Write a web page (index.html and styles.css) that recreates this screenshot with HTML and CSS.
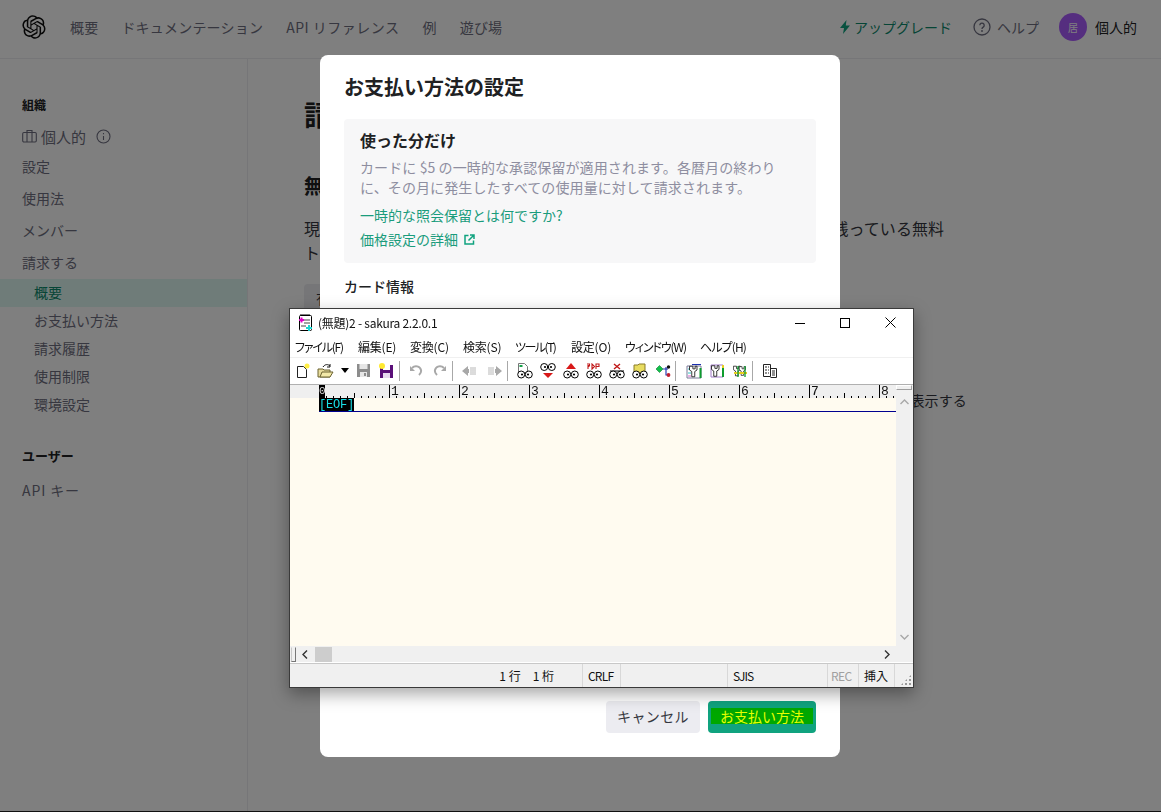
FILE: index.html
```html
<!DOCTYPE html>
<html lang="ja">
<head>
  <meta charset="UTF-8" />
  <meta name="viewport" content="width=device-width, initial-scale=1.0"/>
  <title>お支払い方法の設定</title>
  <link rel="stylesheet" href="styles.css">
</head>
<body>

  <svg class="defs" width="0" height="0">
    <symbol id="eyes" viewBox="0 0 16 16">
      <circle cx="4.2" cy="11.5" r="3.5" fill="#fff" stroke="#000"/>
      <circle cx="11.8" cy="11.5" r="3.5" fill="#fff" stroke="#000"/>
      <circle cx="5" cy="11.5" r="1.1" fill="#000"/>
      <circle cx="11" cy="11.5" r="1.1" fill="#000"/>
    </symbol>
    <symbol id="wrench" viewBox="0 0 16 16">
      <path d="M2 1v5l3 2v7h4V8l3-2V1H9.500v3.500h-3V1z" fill="#fff" stroke="#111" stroke-width="1.100"/>
    </symbol>
  </svg>

  <header class="topbar">
    <svg class="logo" viewBox="0 0 41 41"><path fill="#0d0d0d" d="M37.5324 16.8707C37.9808 15.5241 38.1363 14.0974 37.9886 12.6859C37.8409 11.2744 37.3934 9.91076 36.676 8.68622C35.6126 6.83404 33.9882 5.3676 32.0373 4.4985C30.0864 3.62941 27.9098 3.40259 25.8215 3.85078C24.8796 2.7893 23.7219 1.94125 22.4257 1.36341C21.1295 0.785575 19.7249 0.491269 18.3058 0.500197C16.1708 0.495044 14.0893 1.16803 12.3614 2.42214C10.6335 3.67624 9.34853 5.44666 8.6917 7.47815C7.30085 7.76286 5.98686 8.3414 4.8377 9.17505C3.68854 10.0087 2.73073 11.0782 2.02839 12.312C0.956464 14.1591 0.498905 16.2988 0.721698 18.4228C0.944492 20.5467 1.83612 22.5449 3.268 24.1293C2.81966 25.4759 2.66413 26.9026 2.81182 28.3141C2.95951 29.7256 3.40701 31.0892 4.12437 32.3138C5.18791 34.1659 6.8123 35.6322 8.76321 36.5013C10.7141 37.3704 12.8907 37.5973 14.9789 37.1492C15.9208 38.2107 17.0786 39.0587 18.3747 39.6366C19.6709 40.2144 21.0755 40.5087 22.4946 40.4998C24.6307 40.5054 26.7133 39.8321 28.4418 38.5772C30.1704 37.3223 31.4556 35.5506 32.1119 33.5179C33.5027 33.2332 34.8167 32.6547 35.9659 31.821C37.115 30.9874 38.0728 29.9178 38.7752 28.684C39.8458 26.8371 40.3023 24.6979 40.0789 22.5748C39.8556 20.4517 38.9639 18.4544 37.5324 16.8707ZM22.4978 37.8849C20.7443 37.8874 19.0459 37.2733 17.6994 36.1501C17.7601 36.117 17.8666 36.0586 17.936 36.0161L25.9004 31.4156C26.1003 31.3019 26.2663 31.137 26.3813 30.9378C26.4964 30.7386 26.5563 30.5124 26.5549 30.2825V19.0542L29.9213 20.998C29.9389 21.0068 29.9541 21.0198 29.9656 21.0359C29.977 21.052 29.9842 21.0707 29.9867 21.0902V30.3889C29.9842 32.375 29.1946 34.2791 27.7909 35.6841C26.3872 37.0892 24.4838 37.8806 22.4978 37.8849ZM6.39227 31.0064C5.51397 29.4888 5.19742 27.7107 5.49804 25.9832C5.55718 26.0187 5.66048 26.0818 5.73461 26.1244L13.699 30.7248C13.8975 30.8408 14.1233 30.902 14.3532 30.902C14.583 30.902 14.8088 30.8408 15.0073 30.7248L24.731 25.1103V28.9979C24.7321 29.0177 24.7283 29.0376 24.7199 29.0556C24.7115 29.0736 24.6988 29.0893 24.6829 29.1012L16.6317 33.7497C14.9096 34.7416 12.8643 35.0097 10.9447 34.4954C9.02506 33.9811 7.38785 32.7263 6.39227 31.0064ZM4.29707 13.6194C5.17156 12.0998 6.55279 10.9364 8.19885 10.3327C8.19885 10.4013 8.19491 10.5228 8.19491 10.6071V19.808C8.19351 20.0378 8.25334 20.2638 8.36823 20.4629C8.48312 20.6619 8.64893 20.8267 8.84863 20.9404L18.5723 26.5542L15.206 28.4979C15.1894 28.5089 15.1703 28.5155 15.1505 28.5173C15.1307 28.5191 15.1107 28.516 15.0924 28.5082L7.04046 23.8557C5.32135 22.8601 4.06716 21.2235 3.55289 19.3046C3.03862 17.3858 3.30624 15.3413 4.29707 13.6194ZM31.955 20.0556L22.2312 14.4411L25.5976 12.4981C25.6142 12.4872 25.6333 12.4805 25.6531 12.4787C25.6729 12.4769 25.6928 12.4801 25.7111 12.4879L33.7631 17.1364C34.9967 17.849 36.0017 18.8982 36.6606 20.1613C37.3194 21.4244 37.6047 22.849 37.4832 24.2684C37.3617 25.6878 36.8382 27.0432 35.9743 28.1759C35.1103 29.3086 33.9415 30.1717 32.6047 30.6641C32.6047 30.5947 32.6047 30.4733 32.6047 30.3889V21.188C32.6066 20.9586 32.5474 20.7328 32.4332 20.5338C32.319 20.3348 32.154 20.1698 31.955 20.0556ZM35.3055 15.0128C35.2464 14.9765 35.1431 14.9142 35.069 14.8717L27.1045 10.2712C26.906 10.1554 26.6803 10.0943 26.4504 10.0943C26.2206 10.0943 25.9948 10.1554 25.7963 10.2712L16.0726 15.8858V11.9982C16.0715 11.9783 16.0753 11.9585 16.0837 11.9405C16.0921 11.9225 16.1048 11.9068 16.1207 11.8949L24.1719 7.25025C25.4053 6.53903 26.8158 6.19376 28.2383 6.25482C29.6608 6.31589 31.0364 6.78077 32.2044 7.59508C33.3723 8.40939 34.2842 9.53945 34.8334 10.8531C35.3826 12.1667 35.5464 13.6095 35.3055 15.0128ZM14.2424 21.9419L10.8752 19.9981C10.8576 19.9893 10.8423 19.9763 10.8309 19.9602C10.8195 19.9441 10.8122 19.9254 10.8098 19.9058V10.6071C10.8107 9.18295 11.2173 7.78848 11.9819 6.58696C12.7466 5.38544 13.8377 4.42659 15.1275 3.82264C16.4173 3.21869 17.8524 2.99464 19.2649 3.1767C20.6775 3.35876 22.0089 3.93941 23.1034 4.85067C23.0427 4.88379 22.937 4.94215 22.8668 4.98473L14.9024 9.58517C14.7025 9.69878 14.5366 9.86356 14.4215 10.0626C14.3065 10.2616 14.2466 10.4877 14.2479 10.7175L14.2424 21.9419ZM16.071 17.9991L20.4018 15.4978L24.7325 17.9975V22.9985L20.4018 25.4983L16.071 22.9985V17.9991Z"/></svg>
    <nav class="topnav">
      <a>概要</a>
      <a>ドキュメンテーション</a>
      <a class="api">API リファレンス</a>
      <a>例</a>
      <a>遊び場</a>
    </nav>
    <div class="topright">
      <a class="upgrade">
        <svg width="12" height="16" viewBox="0 0 12 16"><path d="M7.5 1 1 9h4l-1 6 7-8.5H6.8z" fill="#10a37f"/></svg>
        アップグレード
      </a>
      <a class="help">
        <svg width="18" height="18" viewBox="0 0 18 18"><circle cx="9" cy="9" r="8" fill="none" stroke="#6e6e80" stroke-width="1.3"/><path d="M6.8 7.2a2.2 2.2 0 1 1 3.4 1.9c-.8.5-1.2 1-1.2 1.8" fill="none" stroke="#6e6e80" stroke-width="1.3"/><circle cx="9" cy="13" r=".9" fill="#6e6e80"/></svg>
        ヘルプ
      </a>
      <div class="account">
        <span class="avatar">居</span>
        <span>個人的</span>
      </div>
    </div>
  </header>

  <div class="layout">
    <aside class="sidebar">
      <div class="side-head">組織</div>
      <a class="side-link org">
        <svg width="15" height="14" viewBox="0 0 15 14"><rect x=".7" y="3.5" width="13.6" height="9.5" rx="1.2" fill="none" stroke="#6e6e80" stroke-width="1.1"/><path d="M5 13V1.5h5V13" fill="none" stroke="#6e6e80" stroke-width="1.1"/></svg>
        個人的
        <svg class="info" width="15" height="15" viewBox="0 0 15 15"><circle cx="7.5" cy="7.5" r="6.5" fill="none" stroke="#6e6e80" stroke-width="1.1"/><path d="M7.5 7v4M7.5 4v1.3" stroke="#6e6e80" stroke-width="1.1"/></svg>
      </a>
      <a class="side-link">設定</a>
      <a class="side-link">使用法</a>
      <a class="side-link">メンバー</a>
      <a class="side-link">請求する</a>
      <a class="side-sub active">概要</a>
      <a class="side-sub">お支払い方法</a>
      <a class="side-sub">請求履歴</a>
      <a class="side-sub">使用制限</a>
      <a class="side-sub">環境設定</a>
      <div class="side-head user">ユーザー</div>
      <a class="side-link api-key">API キー</a>
    </aside>

    <main class="content">
      <h1>請求する</h1>
      <h2>無料トライアル</h2>
      <p>現在、無料トライアルをご利用いただいています。お客様のアカウントに残っている無料<br>トークンを使い切るまでご利用いただけます。</p>
      <a class="plain-btn">有料アカウントの設定</a>
      <p class="show-more">支払い方法を表示する</p>
    </main>
  </div>

  <div class="overlay">
    <section class="modal">
      <h3>お支払い方法の設定</h3>
      <div class="plan">
        <h4>使った分だけ</h4>
        <p>カードに $5 の一時的な承認保留が適用されます。各暦月の終わりに、その月に発生したすべての使用量に対して請求されます。</p>
        <a class="plan-link first">一時的な照会保留とは何ですか?</a>
        <a class="plan-link">価格設定の詳細
          <svg width="11" height="11" viewBox="0 0 11 11"><path d="M4.500 1.500H1v8.500h8.500V6.500M6 1h4v4M10 1 4.500 6.500" fill="none" stroke="#10a37f" stroke-width="1.500"/></svg>
        </a>
      </div>
      <div class="card-label">カード情報</div>
      <div class="modal-foot">
        <button class="btn-cancel">キャンセル</button>
        <button class="btn-pay"><span class="marked">お支払い方法</span></button>
      </div>
    </section>
  </div>

  <div class="editor">
    <div class="titlebar">
      <svg class="app-icon" width="16" height="17" viewBox="0 0 16 17">
        <rect x="1.500" y="1.500" width="12" height="15" rx="1" fill="#fff" stroke="#000"/>
        <path d="M2.500 1h10" stroke="#000" stroke-dasharray="1 1" stroke-width="2"/>
        <path d="M6 6h6M6 9h6M3 12h5" stroke="#444"/>
        <path d="M1 6h5M3.500 3.500v5" stroke="#e000c8" stroke-width="2"/>
        <path d="M8 14h6M11 11v6" stroke="#18d8d0" stroke-width="2"/>
      </svg>
      <span class="title-text">(無題)2 - sakura 2.2.0.1</span>
      <div class="winctl">
        <svg width="10" height="10" viewBox="0 0 10 10"><path d="M0 5.500h10" stroke="#000"/></svg>
        <svg width="10" height="10" viewBox="0 0 10 10"><rect x=".5" y=".5" width="9" height="9" fill="none" stroke="#000"/></svg>
        <svg width="11" height="11" viewBox="0 0 11 11"><path d="M.5.500l10 10M10.500.500l-10 10" stroke="#000"/></svg>
      </div>
    </div>

    <div class="menubar">
      <span class="m1">ファイル(F)</span>
      <span class="m2">編集(E)</span>
      <span class="m3">変換(C)</span>
      <span class="m4">検索(S)</span>
      <span class="m5">ツール(T)</span>
      <span class="m6">設定(O)</span>
      <span class="m7">ウィンドウ(W)</span>
      <span class="m8">ヘルプ(H)</span>
    </div>

    <div class="toolbar">
      <span class="tool"><svg width="16" height="16" viewBox="0 0 16 16"><path d="M2.500 3.500h6l3 3v8h-9z" fill="#fff" stroke="#222"/><circle cx="12" cy="3" r="2.500" fill="#ffee44"/></svg></span>
      <span class="tool"><svg width="17" height="16" viewBox="0 0 17 16"><path d="M1 6h5l1 1h6v7H1z" fill="#e8dc9c" stroke="#6b6230"/><path d="M3 14l2-5h11l-3 5z" fill="#f3e9a8" stroke="#6b6230"/><path d="M6 4c2-3 5-3 7-1M13 1v3h-3" fill="none" stroke="#111"/></svg></span>
      <span class="tool-arrow"><svg width="8" height="5" viewBox="0 0 8 5"><path d="M0 0h8L4 5z" fill="#000"/></svg></span>
      <span class="tool"><svg width="15" height="15" viewBox="0 0 15 15"><path d="M1 1h13v13H1z" fill="#8c8c8c"/><rect x="3.500" y="1" width="8" height="5" fill="#e6e6e6"/><rect x="4" y="9" width="7" height="5" fill="#e6e6e6"/><rect x="8" y="10" width="2" height="3" fill="#8c8c8c"/></svg></span>
      <span class="tool"><svg width="15" height="16" viewBox="0 0 15 16"><path d="M1 2h13v13H1z" fill="#5a0f78"/><rect x="4" y="2" width="7" height="5" fill="#fff"/><rect x="4" y="10" width="7" height="5" fill="#e8d8f0"/><circle cx="3" cy="3" r="3" fill="#ffe930"/></svg></span>
      <span class="tool-sep"></span>
      <span class="tool"><svg width="13" height="11" viewBox="0 0 13 11"><path d="M2 3c3-3 8-2 9 2 .4 2-.4 3.500-2 5" fill="none" stroke="#a8a8a8" stroke-width="2"/><path d="M0 1v5h5z" fill="#a8a8a8"/></svg></span>
      <span class="tool"><svg width="13" height="11" viewBox="0 0 13 11"><path d="M11 3C8 0 3 1 2 5c-.4 2 .4 3.500 2 5" fill="none" stroke="#a8a8a8" stroke-width="2"/><path d="M13 1v5H8z" fill="#a8a8a8"/></svg></span>
      <span class="tool-sep"></span>
      <span class="tool"><svg width="15" height="12" viewBox="0 0 15 12"><path d="M0 6l6-5v3h1v4H6v3z" fill="#a8a8a8"/><path d="M8 3h6M8 5h6M8 7h6M8 9h6" stroke="#b8b8b8"/></svg></span>
      <span class="tool push"><svg width="15" height="12" viewBox="0 0 15 12"><path d="M15 6L9 1v3H8v4h1v3z" fill="#a8a8a8"/><path d="M1 3h6M1 5h6M1 7h6M1 9h6" stroke="#b8b8b8"/></svg></span>
      <span class="tool-sep"></span>
      <span class="tool"><svg width="16" height="16" viewBox="0 0 16 16"><path d="M1.500.500h6l3 3v6h-9z" fill="#fff" stroke="#777"/><rect x="2.500" y="2" width="3" height="2" fill="#16a34a"/><use href="#eyes" width="16" height="16"/></svg></span>
      <span class="tool"><svg width="16" height="16" viewBox="0 0 16 16"><circle cx="4.200" cy="4" r="3.500" fill="#fff" stroke="#000"/><circle cx="11.800" cy="4" r="3.500" fill="#fff" stroke="#000"/><circle cx="5" cy="4" r="1.100"/><circle cx="11" cy="4" r="1.100"/><path d="M3 10h10l-5 5z" fill="#d81818"/></svg></span>
      <span class="tool"><svg width="16" height="16" viewBox="0 0 16 16"><path d="M8 0l5 6H3z" fill="#d81818"/><use href="#eyes" width="16" height="16"/></svg></span>
      <span class="tool"><svg width="16" height="16" viewBox="0 0 16 16"><path d="M1 1h2.500v1.500H2V6M2 3.500h1.500M6 6l2.500-2.500L6 1zM10 6V1h3v2.500h-3" fill="none" stroke="#c01818" stroke-width="1.100"/><use href="#eyes" width="16" height="16"/></svg></span>
      <span class="tool"><svg width="16" height="16" viewBox="0 0 16 16"><path d="M5 1l6 5M11 1L5 6" stroke="#c01818" stroke-width="1.400"/><path d="M1 8h14" stroke="#000"/><use href="#eyes" width="16" height="16"/></svg></span>
      <span class="tool"><svg width="16" height="16" viewBox="0 0 16 16"><path d="M2 2h4l1-1h6v9H2z" fill="#e8dc60" stroke="#8a7c28"/><use href="#eyes" width="16" height="16"/></svg></span>
      <span class="tool"><svg width="16" height="14" viewBox="0 0 16 14"><path d="M1 5l3.500-3.500L8 5 4.500 8.500z" fill="#12c04a" stroke="#0a7a30" stroke-width=".6"/><path d="M8 5h5M11 3v8h2" fill="none" stroke="#1a2fb0" stroke-width="1.100"/><circle cx="13.500" cy="3" r="1.700" fill="#111"/><circle cx="13.500" cy="11" r="1.900" fill="#c02030"/></svg></span>
      <span class="tool-sep"></span>
      <span class="tool push"><svg width="17" height="16" viewBox="0 0 17 16"><path d="M1 3h14v12H1z" fill="#fff" stroke="#7a7a9a"/><path d="M2 6h3M2 10h3" stroke="#2fc4c4"/><path d="M2 13h3" stroke="#d860c8"/><use href="#wrench" x="2" y="1" width="12" height="15"/><path d="M14.500 5v10" stroke="#0e9c2e" stroke-width="2"/><path d="M6 1.500h9" stroke="#1a2fb0"/></svg></span>
      <span class="tool"><svg width="15" height="15" viewBox="0 0 15 15"><path d="M1 2h12v12H1z" fill="#fff" stroke="#a078c8"/><use href="#wrench" x="0" y="1" width="12" height="14"/><path d="M13 2v12" stroke="#0e9c2e" stroke-width="2"/><path d="M13 2v3" stroke="#e8d020" stroke-width="2"/></svg></span>
      <span class="tool narrow"><svg width="15" height="15" viewBox="0 0 15 15"><use href="#wrench" x="-1" y="1" width="11" height="14"/><use href="#wrench" x="5" y="1" width="10" height="14"/><path d="M1 10h13" stroke="#e8d020" stroke-width="2"/><path d="M5 3v11M12 3v11" stroke="#0e9c2e" stroke-width="1.300"/></svg></span>
      <span class="tool-sep"></span>
      <span class="tool"><svg width="16" height="16" viewBox="0 0 16 16"><path d="M1.500 1.500h7v12h-7zM8.500 5.500h6v9h-6" fill="#fff" stroke="#222"/><path d="M3 4h2M6 4h1M3 7h2M6 7h1M3 10h2M6 10h1M10 8h3M10 10h3M10 12h3" stroke="#222"/></svg></span>
    </div>

    <div class="edit-area">
      <div class="edit-main">
        <div class="ruler">
          <div class="ruler-gutter"></div>
          <div class="ruler-scale">
            <span class="tick-num"><span class="cur-box">0</span></span><span class="tick-num">1</span><span class="tick-num">2</span><span class="tick-num">3</span><span class="tick-num">4</span><span class="tick-num">5</span><span class="tick-num">6</span><span class="tick-num">7</span><span class="tick-num">8</span>
          </div>
        </div>
        <div class="text-pane">
          <div class="text-line"><span class="eof">[EOF]</span></div>
        </div>
      </div>
      <div class="vscroll">
        <span class="split-v"></span>
        <svg width="9" height="6" viewBox="0 0 9 6"><path d="M.5 5l4-4 4 4" fill="none" stroke="#a8a8a8" stroke-width="1.400"/></svg>
        <svg class="down" width="9" height="6" viewBox="0 0 9 6"><path d="M.5 1l4 4 4-4" fill="none" stroke="#a8a8a8" stroke-width="1.400"/></svg>
      </div>
    </div>

    <div class="hscroll">
      <span class="split-h"></span>
      <svg width="6" height="9" viewBox="0 0 6 9"><path d="M5 .5l-4 4 4 4" fill="none" stroke="#333" stroke-width="1.400"/></svg>
      <span class="thumb"></span>
      <svg class="right" width="6" height="9" viewBox="0 0 6 9"><path d="M1 .5l4 4-4 4" fill="none" stroke="#333" stroke-width="1.400"/></svg>
    </div>

    <div class="statusbar">
      <span class="st st-pos">1 行　1 桁</span>
      <span class="st st-eol">CRLF</span>
      <span class="st st-blank"></span>
      <span class="st st-enc">SJIS</span>
      <span class="st st-rec">REC</span>
      <span class="st st-ins">挿入</span>
      <span class="st st-grip"></span>
    </div>
  </div>

</body>
</html>
```

FILE: styles.css
```css
* {
  box-sizing: border-box;
}

html, body {
  margin: 0;
  height: 812px;
  overflow: hidden;
}

body {
  font-family: "Noto Sans CJK JP", "Noto Sans", sans-serif;
  font-size: 14px;
  color: #353740;
  background: #fff;
  border-bottom: 1px solid #222;
}

.defs {
  position: absolute;
}

/* top bar */
.topbar {
  display: flex;
  align-items: center;
  height: 59px;
  padding: 0 24px 4px 22px;
  border-bottom: 1px solid #ececf1;
}

.logo {
  width: 24px;
  height: 24px;
}

.topnav {
  display: flex;
  gap: 23px;
  margin-left: 24px;
  color: #6e6e80;
  letter-spacing: 0.2px;
}

.topnav .api {
  letter-spacing: 0.5px;
}

.topright {
  display: flex;
  align-items: center;
  margin-left: auto;
  color: #6e6e80;
}

.upgrade {
  display: flex;
  align-items: center;
  gap: 3px;
  color: #0d8a6c;
}

.help {
  display: flex;
  align-items: center;
  gap: 6px;
  margin-left: 21px;
}

.account {
  display: flex;
  align-items: center;
  gap: 8px;
  margin-left: 20px;
  color: #202123;
}

.avatar {
  display: flex;
  align-items: center;
  justify-content: center;
  width: 28px;
  height: 28px;
  border-radius: 50%;
  background: #ab5cff;
  color: #fff;
  font-size: 10px;
}

/* sidebar */
.layout {
  display: flex;
  height: 752px;
}

.sidebar {
  width: 248px;
  padding-top: 37px;
  border-right: 1px solid #ececf1;
  color: #6e6e80;
}

.side-head {
  padding-left: 22px;
  font-size: 12px;
  font-weight: 700;
  line-height: 18px;
  color: #202123;
}

.side-head.user {
  margin-top: 28px;
  font-size: 13px;
}

.side-link {
  display: flex;
  align-items: center;
  height: 32px;
  padding: 0 0 2px 22px;
}

.side-link.org {
  gap: 4px;
  margin-top: 9px;
  height: 28px;
  font-size: 15px;
}

.side-link.api-key {
  margin-top: 10px;
  letter-spacing: 0.9px;
}

.info {
  margin-left: 6px;
}

.side-sub {
  display: flex;
  align-items: center;
  height: 28px;
  padding: 0 0 2px 34px;
}

.side-sub.active {
  background: #def8f2;
  color: #0d8a6c;
}

/* page behind the modal */
.content {
  flex: 1;
  padding: 37px 0 0 56px;
  color: #353740;
}

.content h1 {
  margin: 0 0 40px;
  font-size: 28px;
  line-height: 36px;
  color: #202123;
}

.content h2 {
  margin: 0 0 16px;
  font-size: 20px;
  line-height: 28px;
  color: #202123;
}

.content p {
  margin: 0 0 20px;
  font-size: 16px;
  line-height: 24px;
  letter-spacing: 0.08px;
  white-space: nowrap;
}

.plain-btn {
  display: inline-block;
  padding: 4px 12px;
  border-radius: 4px;
  background: #ececf1;
}

.content .show-more {
  margin: 76px 0 0 522px;
  font-size: 14px;
}

/* modal */
.overlay {
  position: fixed;
  top: 0;
  left: 0;
  right: 0;
  bottom: 0;
  display: flex;
  justify-content: center;
  padding: 55px 1px 55px 0;
  background: rgba(0, 0, 0, 0.5);
}

.modal {
  display: flex;
  flex-direction: column;
  width: 520px;
  padding: 22px 24px 24px;
  border-radius: 8px;
  background: #fff;
}

.modal h3 {
  margin: 0 0 22px;
  font-size: 20px;
  line-height: 20px;
  font-weight: 700;
  color: #202123;
}

.plan {
  padding: 11px 16px 14px;
  border-radius: 4px;
  background: #f7f7f8;
}

.plan h4 {
  margin: 0 0 7px;
  font-size: 16px;
  line-height: 20px;
  font-weight: 700;
  color: #202123;
}

.plan p {
  max-width: 420px;
  margin: 0;
  font-size: 14px;
  line-height: 20px;
  letter-spacing: 0.1px;
  color: #8e8ea0;
}

.plan-link {
  display: flex;
  align-items: center;
  gap: 6px;
  margin-top: 4px;
  line-height: 20px;
  color: #1a9c7c;
}

.plan-link.first {
  margin-top: 8px;
}

.card-label {
  margin-top: 13px;
  font-weight: 500;
  line-height: 20px;
  color: #202123;
}

.modal-foot {
  display: flex;
  justify-content: flex-end;
  gap: 8px;
  margin-top: auto;
}

.modal-foot button {
  height: 32px;
  padding: 0 0 2px;
  border: none;
  border-radius: 4px;
  font-family: inherit;
  font-size: 14px;
}

.btn-cancel {
  width: 94px;
  background: #ececf1;
  color: #353740;
  letter-spacing: 0.4px;
}

.btn-pay {
  width: 108px;
  background: #10a37f;
}

.marked {
  display: block;
  margin: 0 3px;
  line-height: 16px;
  background: #00a800;
  color: #e6ff00;
}

/* sakura editor window */
.editor {
  position: absolute;
  left: 289px;
  top: 308px;
  display: flex;
  flex-direction: column;
  width: 625px;
  height: 380px;
  border: 1px solid #3a3a3a;
  background: #fff;
  box-shadow: 0 6px 16px rgba(0, 0, 0, 0.35);
  font-size: 12px;
  color: #111;
}

.titlebar {
  display: flex;
  align-items: center;
  height: 28px;
  padding-left: 8px;
}

.app-icon {
  margin-right: 4px;
}

.title-text {
  font-size: 12px;
  letter-spacing: -0.25px;
}

.winctl {
  display: flex;
  align-items: center;
  gap: 35px;
  margin-left: auto;
  padding-right: 17px;
}

.menubar {
  display: flex;
  align-items: center;
  height: 21px;
  padding-left: 5px;
  border-bottom: 1px solid #f0f0f0;
  font-feature-settings: "palt";
  letter-spacing: -0.2px;
  white-space: nowrap;
}

.m1 { width: 63px; letter-spacing: -1.200px; }
.m2 { width: 52px; }
.m3 { width: 53px; }
.m4 { width: 52px; }
.m5 { width: 56px; letter-spacing: -1.500px; }
.m6 { width: 54px; }
.m7 { width: 75px; letter-spacing: -1.100px; }
.m8 { letter-spacing: -0.900px; }

.toolbar {
  display: flex;
  align-items: center;
  height: 26px;
  padding-left: 1px;
}

.tool {
  display: flex;
  align-items: center;
  justify-content: center;
  width: 23px;
  height: 100%;
}

.tool.push {
  margin-left: 2px;
}

.tool.narrow {
  margin-right: -1px;
}

.tool-arrow {
  display: flex;
  align-items: center;
  justify-content: center;
  width: 15px;
  height: 100%;
}

.tool-sep {
  flex: none;
  width: 1px;
  height: 20px;
  margin: 0 5px 0 1px;
  background: #a8a8a8;
}

.edit-area {
  display: flex;
  height: 263px;
  border-top: 1px solid #b0b0b0;
}

.edit-main {
  flex: 1;
  display: flex;
  flex-direction: column;
  min-width: 0;
  background: #fffbf0;
}

.ruler {
  display: flex;
  height: 13px;
  background: #efefef;
  overflow: hidden;
}

.ruler-gutter {
  flex: none;
  width: 29px;
}

.ruler-scale {
  flex: 1;
  display: flex;
  background-image:
    repeating-linear-gradient(to right, #000 0, #000 1px, transparent 1px, transparent 35px),
    repeating-linear-gradient(to right, #000 0, #000 1px, transparent 1px, transparent 7px);
  background-size: 100% 5px, 100% 2px;
  background-position: 0 bottom, 0 bottom;
  background-repeat: no-repeat;
}

.tick-num {
  flex: none;
  width: 70px;
  padding-left: 1px;
  border-left: 1px solid #000;
  font-family: "Liberation Mono", monospace;
  font-size: 13px;
  line-height: 14px;
}

.cur-box {
  display: block;
  width: 6px;
  height: 13px;
  margin-left: -2px;
  background: #000;
  color: #ddd;
  font-size: 11px;
  line-height: 13px;
}

.text-pane {
  flex: 1;
  padding-left: 29px;
}

.text-line {
  height: 14px;
  border-bottom: 1px solid #000090;
}

.eof {
  display: inline-block;
  width: 35px;
  height: 13px;
  background: #000;
  color: #19e0e8;
  font-family: "Liberation Mono", monospace;
  font-size: 12px;
  line-height: 15px;
  vertical-align: top;
  letter-spacing: -0.2px;
  overflow: hidden;
}

.vscroll {
  position: relative;
  display: flex;
  flex-direction: column;
  align-items: center;
  width: 17px;
  padding-top: 14px;
  background: #f0f0f0;
}

.split-v {
  position: absolute;
  left: 0;
  top: 0;
  width: 16px;
  height: 5px;
  background: #f0f0f0;
  border: 1px solid #a0a0a0;
  border-top-color: #fff;
  border-left-color: #fff;
}

.vscroll .down {
  margin-top: auto;
  margin-bottom: 6px;
}

.hscroll {
  display: flex;
  align-items: center;
  height: 16px;
  padding-left: 1px;
  padding-right: 23px;
  background: #f0f0f0;
}

.split-h {
  width: 5px;
  height: 15px;
  margin-right: 6px;
  border: 1px solid #777;
  border-top-color: #f0f0f0;
  border-left-color: #c8c8c8;
  background: #f0f0f0;
}

.thumb {
  width: 17px;
  height: 15px;
  margin-left: 7px;
  background: #cdcdcd;
}

.hscroll .right {
  margin-left: auto;
}

.statusbar {
  flex: 1;
  display: flex;
  background: #f0f0f0;
  border-top: 1px solid #c8c8c8;
  margin-top: 1px;
  line-height: 23px;
  white-space: nowrap;
}

.st {
  flex: none;
  height: 100%;
  padding-left: 5px;
  border-right: 1px solid #d8d8d8;
}

.st-pos {
  width: 293px;
  text-align: right;
  padding-right: 28px;
}

.st-eol { width: 38px; letter-spacing: -0.8px; }
.st-blank { width: 107px; }
.st-enc { width: 100px; letter-spacing: -1px; }
.st-rec { width: 31px; padding-left: 3px; color: #a0a0a0; letter-spacing: -0.6px; }
.st-ins { width: 36px; padding-left: 5px; }

.st-grip {
  position: relative;
  flex: 1;
  border-right: none;
}

.st-grip::after {
  content: "";
  position: absolute;
  right: 1px;
  bottom: 1px;
  width: 12px;
  height: 12px;
  background-image: radial-gradient(#999 1px, transparent 1px);
  background-size: 4px 4px;
  clip-path: polygon(100% 0, 100% 100%, 0 100%);
}
```
